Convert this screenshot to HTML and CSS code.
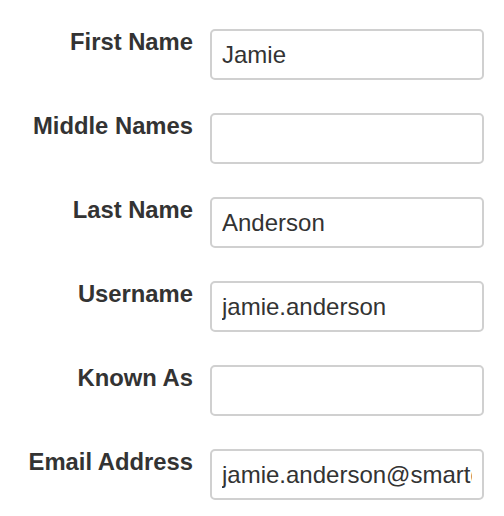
FILE: index.html
```html
<!DOCTYPE html>
<html>
<head>
<meta charset="utf-8">
<link rel="stylesheet" href="styles.css">
</head>
<body>
<form class="form">
  <div class="row">
    <label class="label">First Name</label>
    <input class="input" type="text" value="Jamie">
  </div>
  <div class="row">
    <label class="label">Middle Names</label>
    <input class="input" type="text" value="">
  </div>
  <div class="row">
    <label class="label">Last Name</label>
    <input class="input" type="text" value="Anderson">
  </div>
  <div class="row">
    <label class="label">Username</label>
    <input class="input" type="text" value="jamie.anderson">
  </div>
  <div class="row">
    <label class="label">Known As</label>
    <input class="input" type="text" value="">
  </div>
  <div class="row">
    <label class="label">Email Address</label>
    <input class="input" type="text" value="jamie.anderson@smartdata.example.com">
  </div>
</form>
</body>
</html>
```
FILE: styles.css
```css
html, body {
  margin: 0;
  padding: 0;
  background: #fff;
}
body {
  font-family: Arial, "Liberation Sans", sans-serif;
  color: #333;
}
.form {
  display: flex;
  flex-direction: column;
  gap: 33px;
  padding-top: 29px;
}
.row {
  display: grid;
  grid-template-columns: 193px 274px;
  column-gap: 17px;
  align-items: start;
}
.label {
  text-align: right;
  font-weight: bold;
  font-size: 23.8px;
  line-height: 26px;
  white-space: nowrap;
}
.input {
  box-sizing: border-box;
  width: 274px;
  height: 51px;
  margin: 0;
  padding: 0 10px;
  border: 2px solid #d0d0d0;
  border-radius: 5px;
  font-family: Arial, "Liberation Sans", sans-serif;
  font-size: 24px;
  color: #333;
  background: #fff;
  outline: none;
}
```
